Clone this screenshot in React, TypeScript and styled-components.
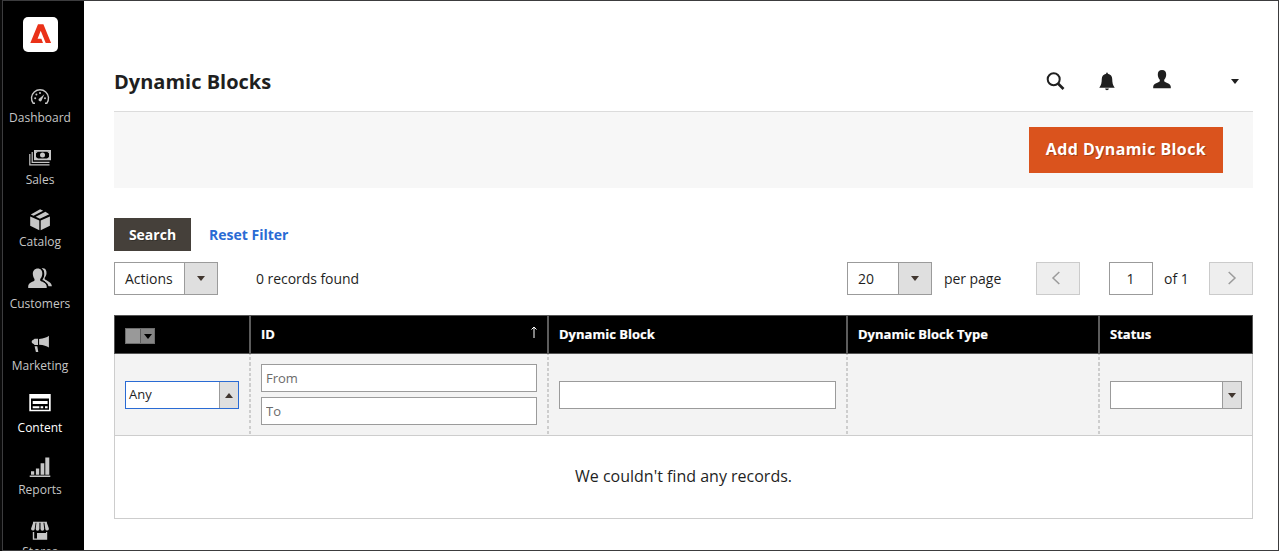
import React from 'react';
import styled, { createGlobalStyle, css } from 'styled-components';

const Global = createGlobalStyle`
  * { box-sizing: border-box; }
  body { margin: 0; background: #fff; overflow: hidden; }
  body, button, input { font-family: 'Open Sans', 'Noto Sans', sans-serif; color: #1f1f1f; }
  button, input { margin: 0; border-radius: 0; }
`;

const Page = styled.div`
  width: 1280px;
  height: 551px;
  border-left: 2px solid #0a0a0a;
  border-right: 1px solid #fff;
`;

const Frame = styled.div`
  display: flex;
  height: 551px;
  border: 1px solid #3c3c3e;
  overflow: hidden;
`;

const Sidebar = styled.nav`
  flex: none;
  width: 81px;
  padding: 16px 7px 0 0;
  background: #000;
  display: flex;
  flex-direction: column;
  align-items: center;
`;

const Logo = styled.a`
  flex: none;
  display: block;
  width: 35px;
  height: 35px;
  margin: 0 0 21px 1px;
  border-radius: 5px;
  background: #fff;
`;

const MenuItem = styled.a<{ $active?: boolean }>`
  flex: none;
  display: flex;
  flex-direction: column;
  align-items: center;
  height: 62px;
  padding-top: 11px;
  font-size: 12px;
  line-height: 16px;
  white-space: nowrap;
  color: ${p => (p.$active ? '#fff' : '#c6c6c6')};
`;

const Icon = styled.svg`
  display: block;
  flex: none;
  overflow: visible;
`;

const Main = styled.main`
  flex: 1;
  min-width: 0;
  padding: 0 25px 0 30px;
`;

const Header = styled.header`
  display: flex;
  align-items: center;
  justify-content: space-between;
  height: 111px;
  padding-top: 51px;
  border-bottom: 1px solid #dcdcdc;
`;

const Title = styled.h1`
  margin: 0;
  font-size: 20px;
  line-height: 28px;
  font-weight: 700;
  padding-top: 1px;
`;

const HeaderTools = styled.div`
  display: flex;
  align-items: center;
  padding: 0 14px 1px 0;
`;

const Tool = styled.span<{ $gap?: number }>`
  display: flex;
  margin-left: ${p => p.$gap ?? 0}px;
`;

const ActionBar = styled.div`
  display: flex;
  justify-content: flex-end;
  height: 76px;
  padding: 15px 30px;
  background: #f7f7f7;
`;

const PrimaryButton = styled.button`
  width: 194px;
  height: 46px;
  padding: 0 0 2px;
  border: 0;
  background: #da531d;
  color: #fff;
  font-size: 16px;
  font-weight: 700;
  letter-spacing: 0.42px;
  white-space: nowrap;
  text-shadow: 1px 1px 0 rgba(0, 0, 0, 0.25);
`;

const FilterActions = styled.div`
  display: flex;
  align-items: center;
  gap: 18px;
  height: 33px;
  margin-top: 30px;
`;

const SearchButton = styled.button`
  width: 77px;
  height: 33px;
  padding: 0;
  border: 0;
  background: #45403a;
  color: #fff;
  font-size: 14px;
  font-weight: 700;
  text-shadow: 1px 1px 0 rgba(0, 0, 0, 0.25);
`;

const ResetLink = styled.a`
  color: #2a6bd4;
  font-size: 14px;
  font-weight: 700;
  white-space: nowrap;
`;

const GridControls = styled.div`
  display: flex;
  align-items: center;
  height: 33px;
  margin-top: 11px;
  font-size: 14px;
  white-space: nowrap;
`;

const Select = styled.div<{ $width: number }>`
  display: flex;
  width: ${p => p.$width}px;
  height: 33px;
  border: 1px solid #9b9b9b;
  background: #fff;
  line-height: 32px;
`;

const SelectValue = styled.span`
  flex: 1;
  padding-left: 10px;
`;

const SelectToggle = styled.span<{ $width: number }>`
  display: flex;
  flex: none;
  align-items: center;
  justify-content: center;
  width: ${p => p.$width}px;
  border-left: 1px solid #9b9b9b;
  background: #dfdfdf;
`;

const RecordCount = styled.span`
  margin-left: 38px;
  letter-spacing: -0.05px;
`;

const Pager = styled.div`
  display: flex;
  align-items: center;
  margin-left: auto;
`;

const PerPage = styled.span`
  width: 92px;
  margin-left: 12px;
  letter-spacing: -0.05px;
`;

const PageButton = styled.button<{ $dir: 'prev' | 'next' }>`
  display: flex;
  align-items: center;
  justify-content: center;
  width: 44px;
  height: 33px;
  padding: ${p => (p.$dir === 'prev' ? '0 4px 2px 0' : '0 0 2px 1px')};
  border: 1px solid #cbcbcb;
  background: #eee;
`;

const PageInput = styled.input`
  width: 44px;
  height: 33px;
  margin-left: 29px;
  padding: 0 1px 0 0;
  border: 1px solid #9b9b9b;
  background: #fff;
  font-size: 14px;
  text-align: center;
`;

const PageTotal = styled.span`
  width: 45px;
  margin-left: 11px;
`;

const Grid = styled.section`
  margin-top: 20px;
  border: 1px solid #cdcdcd;
  border-top: 0;
`;

const columns = css`
  display: grid;
  grid-template-columns: 136px 298px 299px 252px 152px;
`;

const HeadRow = styled.div`
  ${columns}
  height: 39px;
  margin: 0 -1px;
  border: 1px solid #545454;
  background: #000;
  color: #fff;
  font-size: 13px;
  font-weight: 700;
`;

const HeadCell = styled.div`
  display: flex;
  align-items: center;
  justify-content: space-between;
  padding: 0 10px 2px;
  border-right: 2px solid #5c5c5c;
  white-space: nowrap;
  -webkit-text-stroke: 0.2px #fff;
  &:last-child { border-right: 0; }
`;

const SortArrow = styled.svg`
  display: block;
  margin-bottom: 4px;
`;

const FilterRow = styled.div`
  ${columns}
  height: 82px;
  border-bottom: 1px solid #cdcdcd;
  background: #f3f3f3;
`;

const FilterCell = styled.div`
  display: flex;
  flex-direction: column;
  justify-content: center;
  gap: 5px;
  padding: 0 10px;
  border-right: 2px dashed #cdcdcd;
  border-image: repeating-linear-gradient(#cdcdcd 0 3px, #f3f3f3 3px 5px) 2;
  border-width: 0 2px 0 0;
  &:last-child { border: 0; }
`;

const FilterInput = styled.input`
  width: 100%;
  height: 28px;
  padding: 0 4px;
  border: 1px solid #9b9b9b;
  background: #fff;
  font-size: 13px;
  &::placeholder { color: #6b6b6b; opacity: 1; }
`;

const FilterSelect = styled.div<{ $focused?: boolean }>`
  display: flex;
  height: 28px;
  border: 1px solid ${p => (p.$focused ? '#2a6bd4' : '#9b9b9b')};
  background: #fff;
  font-size: 13px;
  line-height: 25px;
`;

const FilterField = styled.div`
  padding-top: 1px;
`;

const FilterValue = styled.span`
  flex: 1;
  padding-left: 3px;
`;

const MassSelect = styled.div`
  display: flex;
  width: 30px;
  height: 16px;
  margin-top: 5px;
  border: 1px solid #6e6e6e;
  background: #999;
`;

const MassToggle = styled.span`
  display: flex;
  align-items: center;
  justify-content: center;
  width: 14px;
  margin-left: auto;
  border-left: 1px solid #5f5f5f;
  background: #858585;
`;

const EmptyRow = styled.div`
  display: flex;
  align-items: center;
  justify-content: center;
  height: 82px;
  padding-bottom: 2px;
  font-size: 16px;
`;

const Caret = ({ up, color = '#41362f' }: { up?: boolean; color?: string }) => (
  <Icon width="8" height="5" viewBox="0 0 8 5" fill={color}>
    <path d={up ? 'M0 5h8L4 0z' : 'M0 0h8L4 5z'} />
  </Icon>
);

const icons: Record<string, React.ReactNode> = {
  Dashboard: (
    <>
      <path d="M8 19.3H6.2A8.5 8.5 0 1 1 19.8 19.3H18" fill="none" stroke="currentColor" strokeWidth="1.4" />
      <path d="M17.3 10.2l-2.7 6.3a1.6 1.6 0 1 1-2.6-1.8z" />
      <circle cx="8.2" cy="14.2" r="1" /><circle cx="9.4" cy="10.6" r="1" />
      <circle cx="13" cy="9" r="1" /><circle cx="18" cy="14.2" r="1" />
    </>
  ),
  Sales: (
    <>
      <path d="M7 4h17v10.3H7zM9 5.8v6.7h13V5.8z" fillRule="evenodd" />
      <path d="M8.8 5.4h2.4L8.8 7.6zM22.2 5.4v2.2l-2.4-2.2zM8.8 12.9v-2.2l2.4 2.2zM22.2 12.9h-2.4l2.4-2.2z" />
      <circle cx="15.5" cy="9.1" r="2.5" />
      <path d="M5.2 6v10.4H22.5M2.8 8v10.9H22.5" fill="none" stroke="currentColor" strokeWidth="1.2" />
    </>
  ),
  Catalog: (
    <>
      <path d="M3.2 8.5l9.1 3.9v9.9l-9.1-4.6zM22.9 8.5l-9.2 3.9v9.9l9.2-4.6z" />
      <path d="M3.8 6.6L13.1 1.2l3 1.5L6.5 7.8zM8.7 8.8l9.7-5.1 3.9 2.6-9.4 4.5z" />
    </>
  ),
  Customers: (
    <>
      <path d="M10.8-1.4c3 0 4.6 2.1 4.5 5.2-.1 2-.9 4-2.1 5.2v1.5c1.1 1.4 6.3 1.7 6.5 5.9v1.5H1.2v-1.5c.2-4.2 5.2-4.5 6.3-5.9V9C6.6 7.8 5.9 5.8 5.8 3.8 5.9.7 7.8-1.4 10.8-1.4z" />
      <path d="M14.6-1.5c3-.8 5.200 1.3 4.9 4.7-.2 2-.9 3.4-1.8 4.5v1.5c1.8 1.4 6.8 2.7 7.2 7h-3.4c-1-3.6-4-4.4-6.3-6.2 1.6-2.3 2.3-4.3 2-7-.1-2-.9-3.6-2.6-4.500z" />
      <path d="M15.8.2c1.3 2.8 1 6.3-1.3 9.3 2.3 1.7 5.4 2.7 6.2 6.3" fill="none" stroke="#000" strokeWidth=".9" />
    </>
  ),
  Marketing: (
    <>
      <path d="M21.9 3.8v11.8c-2.3-1.5-5-2.5-9.800-2.8V6.900c4.800-.2 7.500-1.400 9.800-3.100z" />
      <path d="M11 6.700v6.200H7.600A3 3 0 0 1 6.700 12c-1.500-.4-2-1.300-2-2.200s.6-1.800 2-2.200l.9-.9zM7.600 14.300h2.700l1 5.700H8.900z" />
    </>
  ),
  Content: (
    <>
      <path d="M2.3 0h21.4v17.3H2.3zM4 4.4v11.4h18V4.4z" fillRule="evenodd" />
      <path d="M5.7 6.9h14.900v3H5.7zM5.7 12.2h6.700v2H5.7zM13.6 12.2h2.600v2h-2.600zM18 12.2h2.600v2H18z" />
    </>
  ),
  Reports: <path d="M2.7 19.6h20.600v1.300H2.700zM4 15.3h3.200v3.400H4zM8.900 12.4h3.300v6.300H8.900zM13.6 7.3h3.700v11.400h-3.700zM18.3 1.6h4v17.100h-4z" />,
  Stores: (
    <>
      <path d="M6.400 4h2.300L7.700 11a1.800 1.800 0 0 1-3.600-.4zM9.500 4h2.900v6.800a1.800 1.800 0 0 1-3.700 0zM13.500 4h2.900l.8 6.800a1.800 1.800 0 0 1-3.700 0zM17.300 4h2.300l2.300 6.600a1.800 1.800 0 0 1-3.600.4zM6 3.700h13.900v1H6z" />
      <path d="M5.800 14h1.400v7.500H5.800zM19 14h1.200v7.500H19zM5.800 20.600h14.400v1.100H5.800z" />
      <path d="M10 15h9.500v6H10z" />
    </>
  ),
};

const menu = ['Dashboard', 'Sales', 'Catalog', 'Customers', 'Marketing', 'Content', 'Reports', 'Stores'];

export default function App() {
  return (
    <Page>
      <Global />
      <Frame>
        <Sidebar>
          <Logo>
            <Icon width="35" height="35" viewBox="0 0 35 35">
              <path fill="#ea3118" d="M7.300 26L15 7.300H20.400L28.100 26H22.700L17.700 13.800 14.600 21.700H18.400L20 26Z" />
            </Icon>
          </Logo>
          {menu.map(name => (
            <MenuItem key={name} $active={name === 'Content'}>
              <Icon width="26" height="26" viewBox="0 0 26 26" fill="currentColor">{icons[name]}</Icon>
              {name}
            </MenuItem>
          ))}
        </Sidebar>
        <Main>
          <Header>
            <Title>Dynamic Blocks</Title>
            <HeaderTools>
              <Tool>
                <Icon width="18" height="18" viewBox="0 0 18 18" fill="none" stroke="#1f1f1f">
                  <circle cx="7.700" cy="7.200" r="6" strokeWidth="2" />
                  <path d="M12 11.500L17.500 17" strokeWidth="2.600" />
                </Icon>
              </Tool>
              <Tool $gap={35}>
                <Icon width="16" height="18" viewBox="0 0 16 18" fill="#1f1f1f">
                  <path d="M7.200 1.200a.8.8 0 0 1 1.600 0v.6c2.900.5 4.300 2.400 4.400 5 .1 4.300.6 6.400 2.500 8.900H.3c1.900-2.500 2.400-4.600 2.500-8.900.1-2.600 1.500-4.500 4.400-5zM6.100 16.600h3.800c-.2 1-1 1.700-1.900 1.700s-1.700-.7-1.900-1.700z" />
                </Icon>
              </Tool>
              <Tool $gap={38}>
                <Icon width="18" height="22" viewBox="0 0 18 22" fill="#1f1f1f">
                  <path d="M9 0c2.900 0 4.300 1.900 4.200 4.700-.1 2-.8 3.900-2 5.100v1.400c1.100 1.500 6.300 1.700 6.600 5.500v1.500H.2v-1.500c.3-3.800 5.500-4 6.600-5.500V9.800c-1.200-1.200-1.900-3.100-2-5.100C4.700 1.900 6.100 0 9 0z" />
                </Icon>
              </Tool>
              <Tool $gap={60}><Caret color="#1f1f1f" /></Tool>
            </HeaderTools>
          </Header>
          <ActionBar>
            <PrimaryButton>Add Dynamic Block</PrimaryButton>
          </ActionBar>
          <FilterActions>
            <SearchButton>Search</SearchButton>
            <ResetLink>Reset Filter</ResetLink>
          </FilterActions>
          <GridControls>
            <Select $width={104}>
              <SelectValue>Actions</SelectValue>
              <SelectToggle $width={33}><Caret /></SelectToggle>
            </Select>
            <RecordCount>0 records found</RecordCount>
            <Pager>
              <Select $width={85}>
                <SelectValue>20</SelectValue>
                <SelectToggle $width={33}><Caret /></SelectToggle>
              </Select>
              <PerPage>per page</PerPage>
              <PageButton $dir="prev" aria-label="Previous page">
                <Icon width="8" height="14" viewBox="0 0 8 14" fill="none" stroke="#9b9b9b" strokeWidth="1.5"><path d="M7.300 1L1 7l6.300 6" /></Icon>
              </PageButton>
              <PageInput defaultValue="1" />
              <PageTotal>of 1</PageTotal>
              <PageButton $dir="next" aria-label="Next page">
                <Icon width="8" height="14" viewBox="0 0 8 14" fill="none" stroke="#9b9b9b" strokeWidth="1.5"><path d="M.7 1L7 7 .7 13" /></Icon>
              </PageButton>
            </Pager>
          </GridControls>
          <Grid>
            <HeadRow>
              <HeadCell>
                <MassSelect><MassToggle><Caret color="#000" /></MassToggle></MassSelect>
              </HeadCell>
              <HeadCell>
                ID
                <SortArrow width="6" height="12" viewBox="0 0 6 12" fill="none" stroke="#fff">
                  <path d="M3 12V1M.5 3.500L3 1l2.500 2.500" />
                </SortArrow>
              </HeadCell>
              <HeadCell>Dynamic Block</HeadCell>
              <HeadCell>Dynamic Block Type</HeadCell>
              <HeadCell>Status</HeadCell>
            </HeadRow>
            <FilterRow>
              <FilterCell>
                <FilterField>
                  <FilterSelect $focused>
                    <FilterValue>Any</FilterValue>
                    <SelectToggle $width={19}><Caret up /></SelectToggle>
                  </FilterSelect>
                </FilterField>
              </FilterCell>
              <FilterCell>
                <FilterInput placeholder="From" />
                <FilterInput placeholder="To" />
              </FilterCell>
              <FilterCell>
                <FilterField><FilterInput /></FilterField>
              </FilterCell>
              <FilterCell />
              <FilterCell>
                <FilterField>
                  <FilterSelect>
                    <FilterValue />
                    <SelectToggle $width={19}><Caret /></SelectToggle>
                  </FilterSelect>
                </FilterField>
              </FilterCell>
            </FilterRow>
            <EmptyRow>We couldn't find any records.</EmptyRow>
          </Grid>
        </Main>
      </Frame>
    </Page>
  );
}
